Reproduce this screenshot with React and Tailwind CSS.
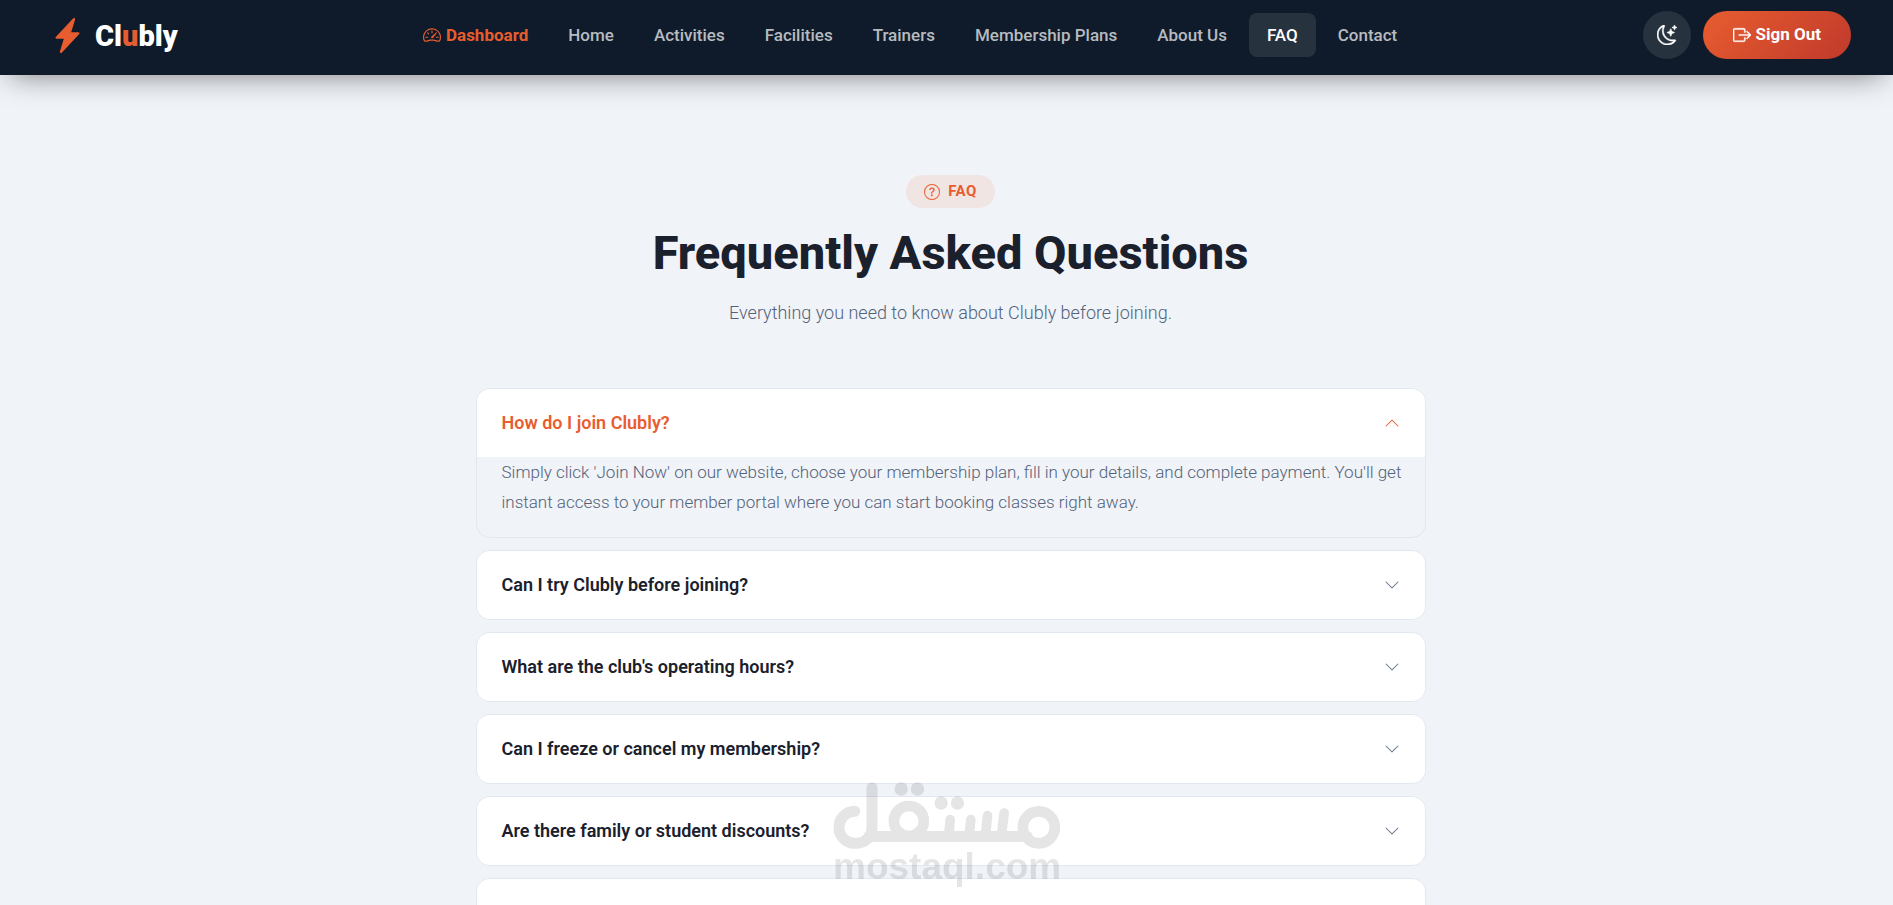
import { useState } from 'react';
import {
  BsBoxArrowRight,
  BsChevronDown,
  BsChevronUp,
  BsLightningChargeFill,
  BsMoonStars,
  BsQuestionCircle,
  BsSpeedometer2,
} from 'react-icons/bs';

const navLinks = ['Home', 'Activities', 'Facilities', 'Trainers', 'Membership Plans', 'About Us', 'FAQ', 'Contact'];

const faqs = [
  {
    question: 'How do I join Clubly?',
    answer:
      "Simply click 'Join Now' on our website, choose your membership plan, fill in your details, and complete payment. You'll get instant access to your member portal where you can start booking classes right away.",
  },
  { question: 'Can I try Clubly before joining?' },
  { question: "What are the club's operating hours?" },
  { question: 'Can I freeze or cancel my membership?' },
  { question: 'Are there family or student discounts?' },
  { question: '' },
];

function Navbar() {
  return (
    <header className="relative z-10 bg-[#0f1b2a] px-[42px] pt-[11px] pb-4 flex items-center justify-between shadow-[0_10px_30px_-10px_rgba(0,0,0,0.5)]">
      <a href="#home" className="flex items-center gap-[10px] pl-2">
        <BsLightningChargeFill className="w-[35px] h-[35px] text-[#e85d2f]" />
        <span className="pt-px text-[29px] leading-9 font-black text-white">
          Cl<span className="text-[#e85d2f]">u</span>bly
        </span>
      </a>

      <nav className="flex items-center gap-1 text-[17px] leading-6 font-medium">
        <a href="#dashboard" className="flex items-center gap-[5px] px-[18px] py-[10px] font-bold text-[#e85d2f]">
          <BsSpeedometer2 className="w-[18px] h-[18px]" />
          Dashboard
        </a>
        {navLinks.map((link) => (
          <a
            key={link}
            href={`#${link}`}
            className={
              link === 'FAQ'
                ? 'px-[18px] py-[10px] rounded-lg bg-[#27323f] text-white'
                : 'px-[18px] py-[10px] rounded-lg text-[#b7bbc0] hover:text-white'
            }
          >
            {link}
          </a>
        ))}
      </nav>

      <div className="flex items-center gap-3">
        <button
          type="button"
          aria-label="Dark mode"
          className="w-12 h-12 rounded-full bg-[#27323f] text-white flex items-center justify-center"
        >
          <BsMoonStars className="w-5 h-5 [stroke-width:0.4]" />
        </button>
        <button
          type="button"
          className="h-12 px-[30px] rounded-full bg-linear-135 from-[#e85d2f] to-[#c0392b] text-white text-[17px] font-bold flex items-center gap-[5px]"
        >
          <BsBoxArrowRight className="w-[18px] h-[18px] [stroke-width:0.4]" />
          Sign Out
        </button>
      </div>
    </header>
  );
}

function FaqItem({ question, answer, open, onToggle }) {
  return (
    <div className="rounded-[14px] border border-[#e2e8f0] overflow-hidden">
      <button
        type="button"
        aria-expanded={open}
        onClick={onToggle}
        className={
          open
            ? 'w-full h-[68px] px-[25px] bg-white flex items-center justify-between text-left text-lg font-semibold text-[#e85d2f]'
            : 'w-full h-[68px] px-[25px] bg-white flex items-center justify-between text-left text-lg font-semibold text-[#1a202c]'
        }
      >
        {question}
        {open ? (
          <BsChevronUp className="ml-auto w-4 h-4" />
        ) : (
          <BsChevronDown className="ml-auto w-4 h-4 text-[#64748b]" />
        )}
      </button>
      {open && answer && (
        <p className="pl-[25px] pr-5 pb-5 text-[17px] leading-[30px] font-light text-[#536279]">{answer}</p>
      )}
    </div>
  );
}

function Watermark() {
  return (
    <div className="fixed bottom-5 left-1/2 -translate-x-1/2 z-20 w-[227px] opacity-10 pointer-events-none text-black">
      <svg viewBox="159 66 681 202" className="w-full" fill="none" stroke="currentColor" strokeLinecap="round">
        <path strokeWidth="33" d="M223 154A48 48 0 0 0 223 250C255 250 274.500 230 274.500 205V83" />
        <path strokeWidth="33" d="M265 229.500H740" />
        <circle strokeWidth="32" cx="385" cy="183" r="45" />
        <circle strokeWidth="32" cx="775" cy="202" r="48" />
        <path strokeWidth="29" d="M509 179L505 225M571 179L566 225M621 167L615 225M671 159L663 225" />
        <g fill="currentColor" stroke="none">
          <circle cx="362" cy="87" r="20" />
          <circle cx="411" cy="87" r="20" />
          <circle cx="482" cy="129" r="20" />
          <circle cx="531" cy="129" r="20" />
        </g>
      </svg>
      <p className="text-center text-[37px] leading-9 font-bold font-['Liberation_Sans',sans-serif]">mostaql.com</p>
    </div>
  );
}

export default function App() {
  const [openIndex, setOpenIndex] = useState(0);

  return (
    <div className="h-screen overflow-x-hidden bg-[#f0f3f8] font-[Roboto,sans-serif]">
      <Navbar />

      <div className="pl-2">
        <main className="max-w-[950px] mx-auto pt-[100px] pb-24">
          {/* Header */}
          <div className="flex flex-col items-center text-center">
            <span className="h-[33px] px-[18px] rounded-full bg-[#f1e5e4] text-[#e85d2f] text-[15px] font-bold tracking-wide flex items-center gap-2">
              <BsQuestionCircle className="w-4 h-4" />
              FAQ
            </span>
            <h1 className="mt-4 text-[47px] leading-[58px] font-extrabold text-[#1a202c]">
              Frequently Asked Questions
            </h1>
            <p className="mt-4 text-lg leading-[30px] font-light text-[#536279]">
              Everything you need to know about Clubly before joining.
            </p>
          </div>

          {/* Questions */}
          <div className="mt-[60px] flex flex-col gap-3">
            {faqs.map((faq, index) => (
              <FaqItem
                key={index}
                question={faq.question}
                answer={faq.answer}
                open={openIndex === index}
                onToggle={() => setOpenIndex(openIndex === index ? -1 : index)}
              />
            ))}
          </div>
        </main>
      </div>

      <Watermark />
    </div>
  );
}
